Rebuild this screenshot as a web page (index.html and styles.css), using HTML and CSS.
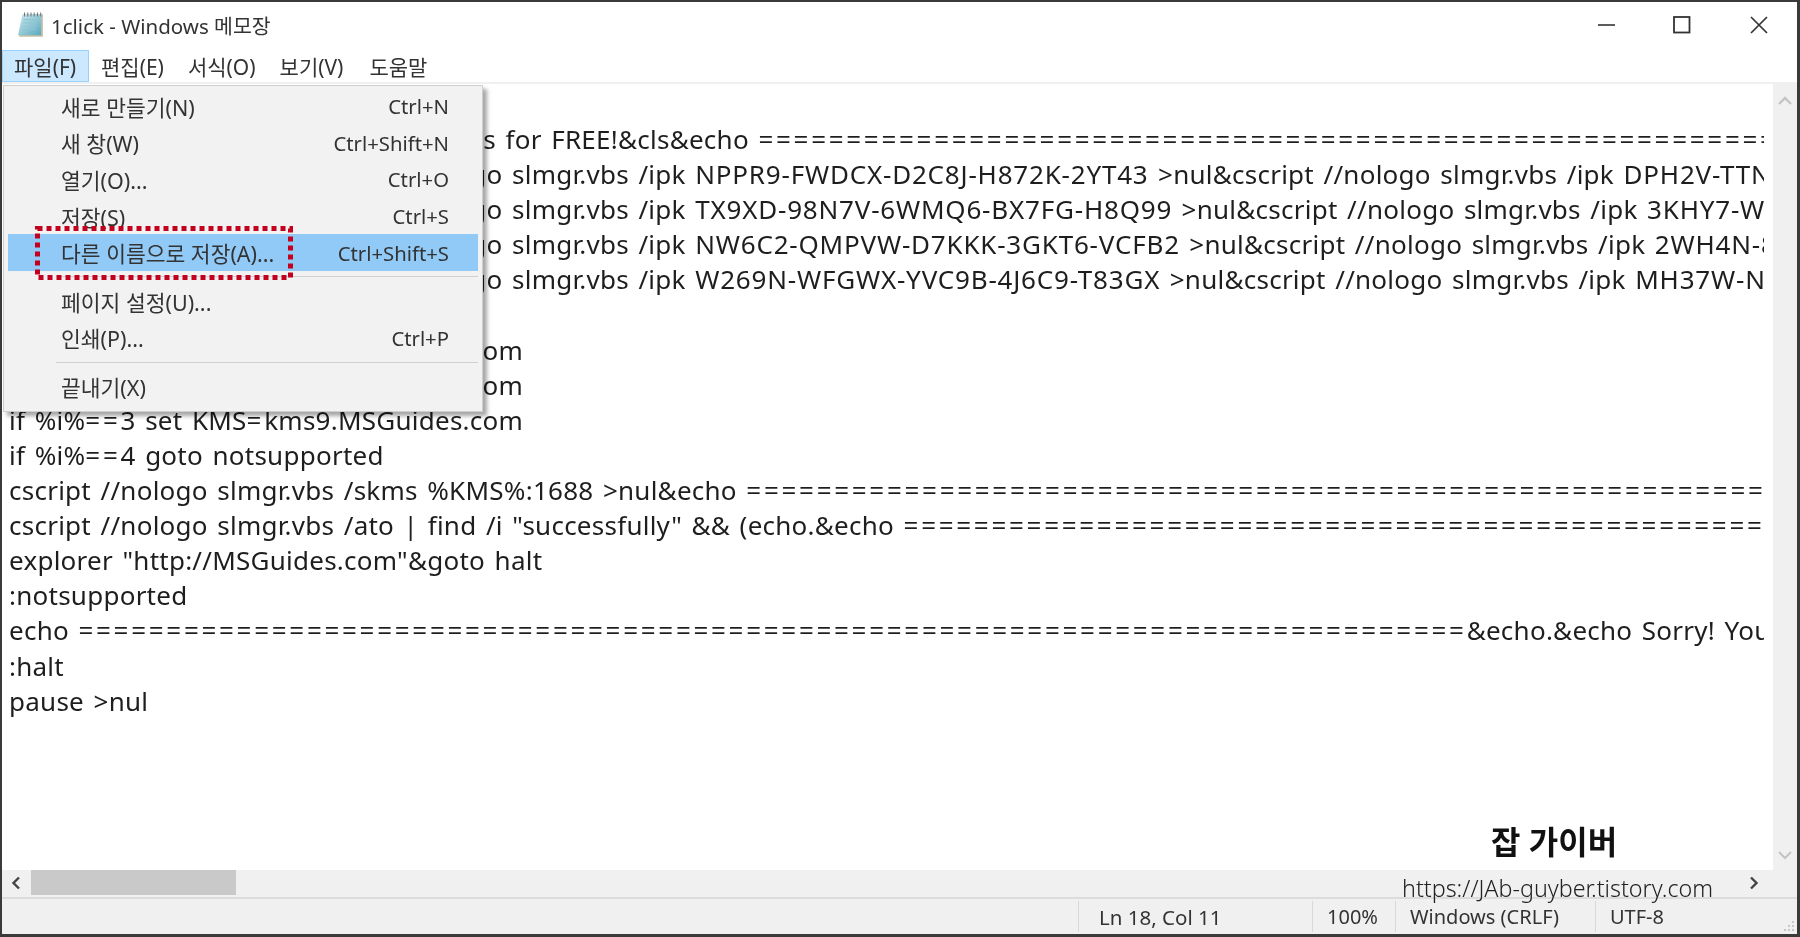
FILE: index.html
```html
<!DOCTYPE html>
<html lang="ko">
<head>
<meta charset="utf-8">
<title>1click - Windows 메모장</title>
<link rel="stylesheet" href="styles.css">
</head>
<body>
<div class="window">
  <header class="titlebar">
    <svg class="app-icon" viewBox="0 0 26 26" width="28" height="28">
      <defs><linearGradient id="pg" x1="0" y1="0" x2="1" y2="1"><stop offset="0" stop-color="#cfeaf0"/><stop offset="1" stop-color="#5aa9bd"/></linearGradient></defs>
      <path d="M6 3h18v21H2z" fill="#c9bfa4"/>
      <path d="M5 3h17.500v19.500H1z" fill="url(#pg)"/>
      <path d="M7 1.500v3.500M10 1.500v3.500M13 1.500v3.500M16 1.500v3.500M19 1.500v3.500M22 1.500v3.500" stroke="#777" stroke-width="1"/>
      <path d="M6 8h13M5.400 11h13M5 14h13M4.500 17h13" stroke="#8fc6d2" stroke-width="1"/>
    </svg>
    <span class="title-text">1click - Windows 메모장</span>
    <div class="controls">
      <svg class="ctl-min" viewBox="0 0 18 18" width="18" height="18"><path d="M0 9h17" stroke="#333" stroke-width="1.600"/></svg>
      <svg viewBox="0 0 18 18" width="18" height="18"><rect x="1" y="1" width="15.500" height="15.500" fill="none" stroke="#333" stroke-width="1.800"/></svg>
      <svg viewBox="0 0 18 18" width="18" height="18"><path d="M1 1l16 16M17 1L1 17" stroke="#333" stroke-width="1.700"/></svg>
    </div>
  </header>
  <nav class="menubar">
    <span class="menu-item active">파일(F)</span>
    <span class="menu-item">편집(E)</span>
    <span class="menu-item">서식(O)</span>
    <span class="menu-item">보기(V)</span>
    <span class="menu-item">도움말</span>
  </nav>
  <main class="editor">
    <div class="text">
      <div class="line">@echo off</div>
      <div class="line"><span class="lead lead-title">title Activate Windows 10 ALL versions</span> for FREE!&amp;cls&amp;echo <span class="eq">==================================================================================================</span></div>
      <div class="line"><span class="lead">echo #Supported products: Pro&amp;cscript //nologo</span> slmgr.vbs /ipk <span class="key">NPPR9-FWDCX-D2C8J-H872K-2YT43</span> &gt;nul&amp;cscript //nologo slmgr.vbs /ipk <span class="key">DPH2V-TTNVB-4X9Q3-TJR4H-KHJW4</span></div>
      <div class="line"><span class="lead">cscript //nologo slmgr.vbs /ckms&amp;cscript //nologo</span> slmgr.vbs /ipk <span class="key">TX9XD-98N7V-6WMQ6-BX7FG-H8Q99</span> &gt;nul&amp;cscript //nologo slmgr.vbs /ipk <span class="key">3KHY7-WNT83-DGQKR-F7HPR-844BM</span></div>
      <div class="line"><span class="lead">cscript //nologo slmgr.vbs /upk&amp;cscript //nologo</span> slmgr.vbs /ipk <span class="key">NW6C2-QMPVW-D7KKK-3GKT6-VCFB2</span> &gt;nul&amp;cscript //nologo slmgr.vbs /ipk <span class="key">2WH4N-8QGBV-H22JP-CT43Q-MDWWJ</span></div>
      <div class="line"><span class="lead">cscript //nologo slmgr.vbs /cpky&amp;cscript //nologo</span> slmgr.vbs /ipk <span class="key">W269N-WFGWX-YVC9B-4J6C9-T83GX</span> &gt;nul&amp;cscript //nologo slmgr.vbs /ipk <span class="key">MH37W-N47XK-V7XM9-C7227-GCQG9</span></div>
      <div class="line">:server</div>
      <div class="line">if %i%<span class="eq">==</span>1 set KMS<span class="eq">=</span>kms7.MSGuides.com</div>
      <div class="line">if %i%<span class="eq">==</span>2 set KMS<span class="eq">=</span>kms8.MSGuides.com</div>
      <div class="line">if %i%<span class="eq">==</span>3 set KMS<span class="eq">=</span>kms9.MSGuides.com</div>
      <div class="line">if %i%<span class="eq">==</span>4 goto notsupported</div>
      <div class="line">cscript //nologo slmgr.vbs /skms %KMS%:1688 &gt;nul&amp;echo <span class="eq">==================================================================================================</span></div>
      <div class="line">cscript //nologo slmgr.vbs /ato | find /i "successfully" &amp;&amp; (echo.&amp;echo <span class="eq">==================================================================================================</span></div>
      <div class="line">explorer "http://MSGuides.com"&amp;goto halt</div>
      <div class="line">:notsupported</div>
      <div class="line">echo <span class="eq">===============================================================================</span>&amp;echo.&amp;echo Sorry! Your version is not supported</div>
      <div class="line">:halt</div>
      <div class="line">pause &gt;nul</div>
    </div>
    <aside class="vscroll">
      <svg viewBox="0 0 14 10" width="14" height="10"><path d="M1 8l6-6 6 6" fill="none" stroke="#c4c4c4" stroke-width="2.400"/></svg>
      <svg viewBox="0 0 14 10" width="14" height="10"><path d="M1 2l6 6 6-6" fill="none" stroke="#c4c4c4" stroke-width="2"/></svg>
    </aside>
  </main>
  <div class="hscroll">
    <svg class="arrow" viewBox="0 0 10 14" width="10" height="14"><path d="M8 1.500L2.500 7 8 12.500" fill="none" stroke="#444" stroke-width="2.400"/></svg>
    <div class="thumb"></div>
    <svg class="arrow arrow-right" viewBox="0 0 10 14" width="10" height="14"><path d="M2 1.500L7.500 7 2 12.500" fill="none" stroke="#444" stroke-width="2.400"/></svg>
  </div>
  <footer class="statusbar">
    <span class="cell cell-pos">Ln 18, Col 11</span>
    <span class="cell cell-zoom">100%</span>
    <span class="cell cell-eol">Windows (CRLF)</span>
    <span class="cell cell-enc">UTF-8</span>
    <svg class="grip" viewBox="0 0 12 12" width="12" height="12"><path d="M9 1h2v2H9zM5 5h2v2H5zM9 5h2v2H9zM1 9h2v2H1zM5 9h2v2H5zM9 9h2v2H9z" fill="#c8c8c8"/></svg>
  </footer>

  <div class="dropdown">
    <div class="row"><span>새로 만들기(N)</span><span class="keys">Ctrl+N</span></div>
    <div class="row"><span>새 창(W)</span><span class="keys">Ctrl+Shift+N</span></div>
    <div class="row"><span>열기(O)...</span><span class="keys">Ctrl+O</span></div>
    <div class="row"><span>저장(S)</span><span class="keys">Ctrl+S</span></div>
    <div class="row selected"><span>다른 이름으로 저장(A)...</span><span class="keys">Ctrl+Shift+S</span></div>
    <div class="sep"></div>
    <div class="row"><span>페이지 설정(U)...</span></div>
    <div class="row"><span>인쇄(P)...</span><span class="keys">Ctrl+P</span></div>
    <div class="sep"></div>
    <div class="row"><span>끝내기(X)</span></div>
  </div>
  <svg class="callout" viewBox="0 0 258 54" width="258" height="54"><rect x="2.500" y="2.500" width="253" height="49" fill="none" stroke="#c4001f" stroke-width="5" stroke-dasharray="5 4"/></svg>
  <div class="wm-name">잡 가이버</div>
  <div class="wm-url">https://JAb-guyber.tistory.com</div>
</div>
</body>
</html>
```
FILE: styles.css
```css
* { box-sizing: border-box; }
html, body { margin: 0; height: 100%; overflow: hidden; background: #fff; }
body { font-family: "Noto Sans", "Noto Sans CJK KR", sans-serif; color: #222; }
.window {
  position: relative;
  width: 1800px;
  height: 937px;
  display: flex;
  flex-direction: column;
  border: solid #3a3a3a;
  border-width: 2px 3px 3px 2px;
  background: #fff;
  filter: blur(0.35px);
}
.titlebar { height: 48px; display: flex; align-items: center; padding: 0 0 2px 15px; flex: none; }
.app-icon { margin-right: 6px; }
.title-text { font-size: 20.5px; color: #333; }
.controls { margin-left: auto; display: flex; gap: 59px; padding-right: 29px; }
.ctl-min { margin-right: -2px; }
.menubar { height: 34px; flex: none; display: flex; align-items: stretch; font-size: 21px; color: #333; border-bottom: 2px solid #f0f0f0; }
.menu-item { display: flex; align-items: center; padding: 0 12px; }
.menu-item:nth-child(4) { padding-right: 14px; }
.menu-item.active { background: #cce8ff; border: 1px solid #99d1ff; width: 87px; padding: 0 0 0 11px; white-space: nowrap; }
.editor { flex: 1; display: flex; min-height: 0; }
.text { flex: 1; min-width: 0; overflow: hidden; margin-right: 9px; padding: 3px 0 0 7px; font-size: 26px; line-height: 35.1px; color: #1e1e1e; word-spacing: 2.5px; letter-spacing: 0.25px; }
.line { white-space: nowrap; height: 35.1px; }
.lead { display: inline-flex; justify-content: flex-end; width: 493.5px; white-space: nowrap; overflow: hidden; vertical-align: top; }
.lead-title { width: 487px; }
.eq { letter-spacing: 2.7px; }
.key { letter-spacing: 0.8px; }
.vscroll { width: 24px; flex: none; background: #f0f0f0; display: flex; flex-direction: column; justify-content: space-between; align-items: center; padding: 12px 0 10px; }
.hscroll { height: 29px; flex: none; background: #f0f0f0; display: flex; align-items: flex-start; border-bottom: 2px solid #dcdcdc; }
.arrow { margin: 6px 0 0 9px; flex: none; }
.thumb { width: 205px; height: 25px; margin-left: 10px; background: #c9c9c9; }
.arrow-right { margin-left: auto; margin-right: 38px; }
.statusbar { height: 35px; flex: none; background: #f0f0f0; display: flex; align-items: stretch; font-size: 20px; color: #333; position: relative; padding-bottom: 2px; }
.cell { display: flex; align-items: center; border-left: 1px solid #d9d9d9; margin: 2px 0 0; }
.cell-pos { margin-left: 1076px; width: 234px; padding-left: 20px; font-size: 20.5px; }
.cell-zoom { width: 83px; padding-left: 14px; }
.cell-eol { width: 200px; padding-left: 14px; }
.cell-enc { padding-left: 14px; }
.grip { margin-left: auto; align-self: flex-end; margin-right: 2px; }
.dropdown { position: absolute; left: 1px; top: 83px; width: 480px; height: 327px; padding: 2px 4px 3px; background: #f2f2f2; border: 1px solid #cfcfcf; box-shadow: 4px 4px 4px rgba(0,0,0,.35); font-size: 21.5px; color: #333; }
.row { height: 36.6px; display: flex; justify-content: space-between; align-items: center; padding: 0 29px 0 53px; }
.keys { font-size: 20.3px; }
.row.selected { background: #91c9f7; }
.sep { height: 1px; margin: 5.5px 0 5.5px 48px; background: #d0d0d0; }
.callout { position: absolute; left: 33px; top: 224px; }
.wm-name { position: absolute; left: 1489px; top: 820px; font-size: 32px; font-weight: 700; color: #111; line-height: 40px; }
.wm-url { position: absolute; left: 1400px; top: 872px; font-size: 23.3px; line-height: 28px; font-weight: 300; color: #222; }
```
